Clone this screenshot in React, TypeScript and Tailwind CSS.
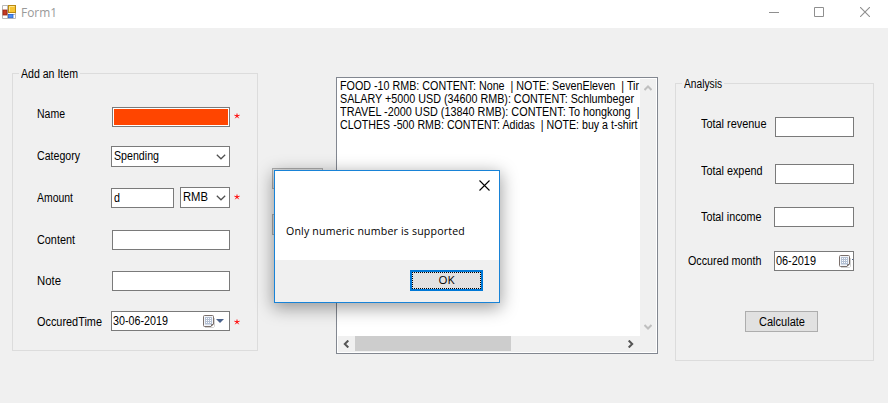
import { useLayoutEffect, useRef, useState } from 'react';
import type { ReactNode } from 'react';
import clsx from 'clsx';

// Single line of text, condensed or widened horizontally to fill `width` pixels.
function Fit({ text, width, className }: { text: string; width: number; className?: string }) {
  const ref = useRef<HTMLSpanElement>(null);
  const [scale, setScale] = useState(1);
  useLayoutEffect(() => {
    const el = ref.current;
    if (!el) return;
    el.style.transform = 'none';
    const next = width / el.getBoundingClientRect().width;
    el.style.transform = `scaleX(${next})`;
    setScale(next);
  }, [text, width]);
  return (
    <span className={clsx('block h-4 shrink-0 whitespace-pre leading-4', className)} style={{ width }}>
      <span ref={ref} className="inline-block origin-left" style={{ transform: `scaleX(${scale})` }}>
        {text}
      </span>
    </span>
  );
}

function Group({ title, titleWidth, className, children }: { title: string; titleWidth: number; className: string; children: ReactNode }) {
  return (
    <section className={clsx('flex shrink-0 flex-col border border-[#dcdcdc]', className)}>
      <div className="-mt-2 ml-[6px] flex h-4 self-start bg-[#f0f0f0] px-[2px]">
        <Fit text={title} width={titleWidth} />
      </div>
      {children}
    </section>
  );
}

function Row({ label, labelWidth, labelClass, className, children }: { label: string; labelWidth: number; labelClass: string; className?: string; children: ReactNode }) {
  return (
    <div className={clsx('flex items-start', className)}>
      <div className={clsx('shrink-0 pl-[0.5px]', labelClass)}>
        <Fit text={label} width={labelWidth} />
      </div>
      {children}
    </div>
  );
}

function Box({ className, children }: { className?: string; children?: ReactNode }) {
  return <div className={clsx('flex shrink-0 border border-[#7a7a7a] bg-white', className)}>{children}</div>;
}

function Star({ className }: { className: string }) {
  return (
    <svg className={clsx('shrink-0', className)} width="6" height="6" viewBox="0 0 6 6" fill="#ff1a1a" stroke="#ff1a1a" strokeWidth="1">
      <circle cx="3" cy="3" r=".8" />
      <path d="M3 .5V3M3 3L.4 2.2M3 3l2.6-.8M3 3L1.3 5.2M3 3l1.7 2.2" />
    </svg>
  );
}

function Chevron({ className }: { className: string }) {
  return (
    <svg className={clsx('shrink-0', className)} width="10" height="6" viewBox="0 0 10 6" fill="none" stroke="#505050" strokeWidth="1.2">
      <path d="M.8.7L5 4.8 9.2.7" />
    </svg>
  );
}

function CalendarIcon({ className }: { className: string }) {
  return (
    <svg className={clsx('shrink-0', className)} width="12" height="13" viewBox="0 0 12 13">
      <path d="M2 12.5h8.5l1-1V3" fill="none" stroke="#d2d2d2" />
      <path d="M1.5.5h8q1 0 1 1v7.5l-2.5 2.5H1.5q-1 0-1-1v-9q0-1 1-1z" fill="#f4f6fa" stroke="#7b706c" />
      <path d="M8 11.5V9h2.5z" fill="#685f5c" />
      <path d="M2 2h7v7.5H2z" fill="#b4c0d3" />
      <path d="M3 3h1v1H3zM5 3h1v1H5zM7 3h1v1H7zM3 5h1v1H3zM5 5h1v1H5zM7 5h1v1H7zM3 7h1v1H3zM5 7h1v1H5zM7 7h1v1H7z" fill="#fff" />
    </svg>
  );
}

function FormIcon() {
  return (
    <svg className="ml-[2px] mt-[5px] shrink-0" width="14" height="14" viewBox="0 0 14 14">
      <path d="M.5.5h13v13H.5zM5.5 1v12M1 5.5h5M1 9.5h12" fill="#fff" stroke="#b8b8b8" />
      <rect x="6.5" y=".5" width="7" height="7" fill="#f8c534" stroke="#b88912" />
      <path d="M7.5 6.5v-5h5" fill="none" stroke="#ffe58a" />
      <rect x="1" y="5" width="4" height="5" fill="#c33a24" stroke="#982313" strokeWidth=".8" />
      <rect x="6.4" y="9.4" width="4.6" height="3.3" fill="#4b8df2" stroke="#2863cf" strokeWidth=".8" />
    </svg>
  );
}

function ScrollArrow({ d, color, className }: { d: string; color: string; className: string }) {
  return (
    <svg className={clsx('shrink-0', className)} width="8" height="8" viewBox="0 0 8 8" fill="none" stroke={color} strokeWidth="2">
      <path d={d} />
    </svg>
  );
}

const entries = [
  { text: 'FOOD -10 RMB: CONTENT: None  | NOTE: SevenEleven  | Tir', width: 299 },
  { text: 'SALARY +5000 USD (34600 RMB): CONTENT: Schlumbeger', width: 294 },
  { text: 'TRAVEL -2000 USD (13840 RMB): CONTENT: To hongkong  |', width: 299.5 },
  { text: 'CLOTHES -500 RMB: CONTENT: Adidas  | NOTE: buy a t-shirt', width: 297.5 },
];

function EntryList() {
  return (
    <div className="ml-[13px] mt-[49px] flex h-[277px] w-[322px] shrink-0 flex-col border border-[#828790] bg-white p-px">
      <div className="flex h-[257px]">
        <div className="flex w-[302px] shrink-0 flex-col pl-px">
          {entries.map((e) => (
            <div key={e.text} className="h-[13px] shrink-0">
              <Fit text={e.text} width={e.width} className="-mt-px ml-[0.5px]" />
            </div>
          ))}
        </div>
        <div className="flex w-4 flex-col items-center justify-between bg-[#f0f0f0] pb-[5px] pt-[5px]">
          <ScrollArrow d="M.5 6L4 2.5 7.5 6" color="#bfbfbf" className="" />
          <ScrollArrow d="M.5 2L4 5.5 7.5 2" color="#bfbfbf" className="" />
        </div>
      </div>
      <div className="flex h-4 w-[318px] bg-[#f0f0f0]">
        <ScrollArrow d="M6.3.5L2.8 4l3.5 3.5" color="#555" className="ml-1 mt-1" />
        <div className="ml-[5px] h-[15px] w-[156px] bg-[#cdcdcd]" />
        <ScrollArrow d="M1.7.5L5.2 4 1.7 7.5" color="#555" className="ml-[116px] mt-1" />
      </div>
    </div>
  );
}

function MessageBox() {
  return (
    <div className="absolute left-[274px] top-[170px] flex h-[133px] w-[226px] flex-col border border-[#1883d7] bg-white font-['Open_Sans',sans-serif] shadow-[0_4px_16px_1px_rgba(0,0,0,0.38)]">
      <div className="flex h-[89px] flex-col">
        <svg className="ml-[204px] mt-[9px]" width="11" height="11" viewBox="0 0 11 11" stroke="#000" strokeWidth="1.1">
          <path d="M.5.5l10 10M10.5.5l-10 10" />
        </svg>
        <Fit text="Only numeric number is supported" width={179} className="ml-[11px] mt-[32px] text-[11.5px] tracking-[0.2px]" />
      </div>
      <div className="flex flex-1 items-start justify-end bg-[#f0f0f0] pr-4 pt-[10px]">
        <div className="h-[21px] w-[73px] border-2 border-[#0078d7] bg-[#e1e1e1]">
          <div className="flex h-[17px] justify-center border border-dotted border-black">
            <Fit text="OK" width={16} className="-mt-px text-[11.5px]" />
          </div>
        </div>
      </div>
    </div>
  );
}

export default function App() {
  return (
    <div className="relative flex h-[403px] w-[888px] flex-col overflow-hidden bg-[#f0f0f0] font-['Liberation_Sans',Arial,sans-serif] text-[12px] text-black">
      <header className="flex h-7 shrink-0 bg-white">
        <FormIcon />
        <Fit text="Form1" width={36} className="ml-[5px] mt-[5px] font-['Open_Sans',sans-serif] text-[#999]" />
        <div className="ml-auto flex text-[#8f8f8f]">
          <svg className="mt-[12px]" width="10" height="1"><path d="M0 .5h10" stroke="#8f8f8f" /></svg>
          <svg className="ml-[35px] mt-[7px]" width="10" height="10" fill="none" stroke="#8f8f8f"><path d="M.5.5h9v9h-9z" /></svg>
          <svg className="ml-[36px] mr-[18px] mt-[7px]" width="10" height="10" stroke="#8f8f8f" strokeWidth="1.1"><path d="M0 0l10 10M10 0L0 10" /></svg>
        </div>
      </header>
      <main className="flex flex-1 items-start">
        <Group title="Add an Item" titleWidth={57} className="ml-3 mt-[45px] h-[278px] w-[246px]">
          <div className="ml-[23px] mt-[25px] flex flex-col">
            <Row label="Name" labelWidth={28} labelClass="-mt-px w-[76px]" className="h-5">
              <Box className="h-5 w-[118px] p-px"><div className="flex-1 bg-[#ff4500]" /></Box>
              <Star className="ml-1 mt-[6px]" />
            </Row>
            <Row label="Category" labelWidth={43} labelClass="mt-[2px] w-[75px]" className="mt-[19px] h-[21px]">
              <Box className="h-[21px] w-[119px] justify-between">
                <Fit text="Spending" width={45} className="ml-[2px] mt-px" />
                <Chevron className="mr-[3px] mt-[7px]" />
              </Box>
            </Row>
            <Row label="Amount" labelWidth={36} labelClass="mt-[3px] w-[75px]" className="mt-5 h-[21px]">
              <Box className="mt-px h-5 w-[63px]"><Fit text="d" width={6} className="ml-[2px] mt-px" /></Box>
              <Box className="ml-[6px] h-[21px] w-[50px] justify-between">
                <Fit text="RMB" width={25} className="ml-[2px] mt-px" />
                <Chevron className="mr-[3px] mt-[7px]" />
              </Box>
              <Star className="ml-1 mt-[7px]" />
            </Row>
            <Row label="Content" labelWidth={38} labelClass="mt-[2px] w-[76px]" className="mt-[22px] h-5">
              <Box className="h-5 w-[118px]" />
            </Row>
            <Row label="Note" labelWidth={24} labelClass="mt-[2px] w-[76px]" className="mt-[21px] h-5">
              <Box className="h-5 w-[118px]" />
            </Row>
            <Row label="OccuredTime" labelWidth={65} labelClass="mt-[3px] w-[75px]" className="mt-5 h-5">
              <Box className="h-5 w-[119px]">
                <Fit text="30-06-2019" width={55} className="ml-px mt-px" />
                <CalendarIcon className="ml-[35px] mt-[3px]" />
                <svg className="ml-[1px] mt-[7px]" width="8" height="4"><path d="M0 0h8L4 4z" fill="#4a628c" /></svg>
              </Box>
              <Star className="ml-1 mt-[8px]" />
            </Row>
          </div>
        </Group>
        <div className="ml-[14px] mt-[140px] flex w-[51px] shrink-0 flex-col gap-[25px]">
          <div className="h-[21px] border border-[#adadad] bg-[#e1e1e1]" />
          <div className="h-[21px] border border-[#adadad] bg-[#e1e1e1]" />
        </div>
        <EntryList />
        <Group title="Analysis" titleWidth={38} className="ml-[17px] mt-[55px] h-[278px] w-[199px]">
          <div className="ml-[11px] mt-[25px] flex flex-col">
            <Row label="Total revenue" labelWidth={65.5} labelClass="-mt-px w-[75px]" className="ml-[13px] h-5">
              <Box className="h-5 w-[79px]" />
            </Row>
            <Row label="Total expend" labelWidth={61.5} labelClass="-mt-px w-[75px]" className="ml-[13px] mt-[27px] h-5">
              <Box className="h-5 w-[79px]" />
            </Row>
            <Row label="Total income" labelWidth={60.5} labelClass="mt-[2px] w-[74px]" className="ml-[13px] mt-[23px] h-5">
              <Box className="h-5 w-[80px]" />
            </Row>
            <Row label="Occured month" labelWidth={73.5} labelClass="mt-[2px] w-[87px]" className="mt-6 h-5">
              <Box className="h-5 w-[80px]">
                <Fit text="06-2019" width={40} className="ml-px mt-px" />
                <CalendarIcon className="ml-[23px] mt-[3px]" />
                <div className="ml-px mt-[7px] h-px w-px bg-[#4a628c]" />
              </Box>
            </Row>
            <div className="ml-[58px] mt-10 flex h-[21px] w-[73px] justify-center border border-[#adadad] bg-[#e1e1e1]">
              <Fit text="Calculate" width={46} className="mt-[2px]" />
            </div>
          </div>
        </Group>
      </main>
      <MessageBox />
    </div>
  );
}
